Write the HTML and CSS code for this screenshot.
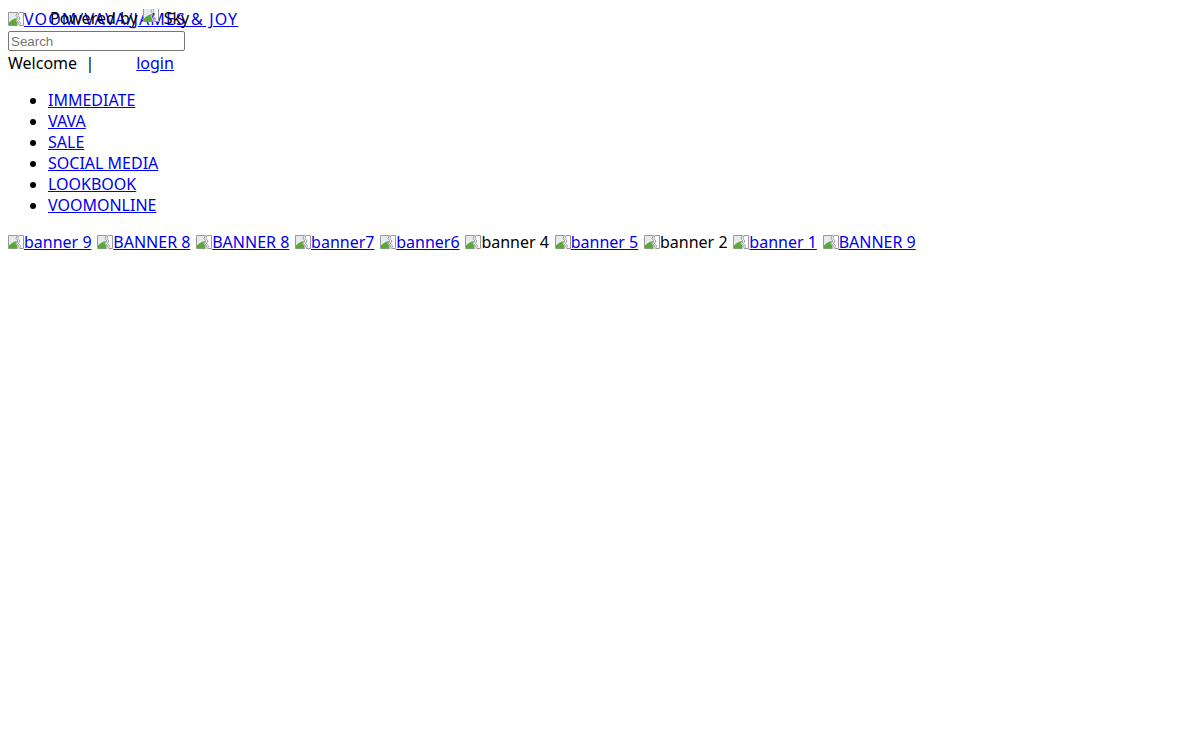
FILE: index.html
```html
<!DOCTYPE html>
<html lang="en">
<head>
<meta charset="utf-8">
<title>VOOM/VAVA/JAMES &amp; JOY</title>
<link rel="stylesheet" href="styles.css">
</head>
<body>
<div class="header">
  <div class="logo-line">
    <a class="alt-link logo" href="#"><svg class="broken" viewBox="0 0 16 16" aria-hidden="true"><path d="M.5 1.5h9l-1.5 3 2 2.5-1.5 2.5 2 2.5-1 2.5H.5z" fill="#e4eaf0" stroke="#9a9a9a"/><path d="M1 14.5V11.5c2.5-2.5 5-4 8.2-4.5l-1.7 2.5 2 2.5-1 2.5z" fill="#5ca63a"/><path d="M11 1.5h4.5v13h-4l1-2.5-2-2.5 1.5-2.5-2-2.5z" fill="#fff" stroke="#9a9a9a"/></svg><span class="logo-text">VOOM/VAVA/JAMES &amp; JOY</span></a>
  </div>
  <div class="powered">Powered by <svg class="broken" viewBox="0 0 16 16" aria-hidden="true"><path d="M.5 1.5h9l-1.5 3 2 2.5-1.5 2.5 2 2.5-1 2.5H.5z" fill="#e4eaf0" stroke="#9a9a9a"/><path d="M1 14.5V11.5c2.5-2.5 5-4 8.2-4.5l-1.7 2.5 2 2.5-1 2.5z" fill="#5ca63a"/><path d="M11 1.5h4.5v13h-4l1-2.5-2-2.5 1.5-2.5-2-2.5z" fill="#fff" stroke="#9a9a9a"/></svg>Sky</div>
  <form class="search"><input type="text" placeholder="Search"></form>
  <div class="welcome"><span>Welcome&nbsp; |</span><a class="login" href="#">login</a></div>
</div>
<ul class="nav">
  <li><a href="#">IMMEDIATE</a></li>
  <li><a href="#">VAVA</a></li>
  <li><a href="#">SALE</a></li>
  <li><a href="#">SOCIAL MEDIA</a></li>
  <li><a href="#">LOOKBOOK</a></li>
  <li><a href="#">VOOMONLINE</a></li>
</ul>
<div class="banners">
  <a class="alt-link" href="#"><svg class="broken" viewBox="0 0 16 16" aria-hidden="true"><path d="M.5 1.5h9l-1.5 3 2 2.5-1.5 2.5 2 2.5-1 2.5H.5z" fill="#e4eaf0" stroke="#9a9a9a"/><path d="M1 14.5V11.5c2.5-2.5 5-4 8.2-4.5l-1.7 2.5 2 2.5-1 2.5z" fill="#5ca63a"/><path d="M11 1.5h4.5v13h-4l1-2.5-2-2.5 1.5-2.5-2-2.5z" fill="#fff" stroke="#9a9a9a"/></svg>banner 9</a>
  <a class="alt-link" href="#"><svg class="broken" viewBox="0 0 16 16" aria-hidden="true"><path d="M.5 1.5h9l-1.5 3 2 2.5-1.5 2.5 2 2.5-1 2.5H.5z" fill="#e4eaf0" stroke="#9a9a9a"/><path d="M1 14.5V11.5c2.5-2.5 5-4 8.2-4.5l-1.7 2.5 2 2.5-1 2.5z" fill="#5ca63a"/><path d="M11 1.5h4.5v13h-4l1-2.5-2-2.5 1.5-2.5-2-2.5z" fill="#fff" stroke="#9a9a9a"/></svg>BANNER 8</a>
  <a class="alt-link" href="#"><svg class="broken" viewBox="0 0 16 16" aria-hidden="true"><path d="M.5 1.5h9l-1.5 3 2 2.5-1.5 2.5 2 2.5-1 2.5H.5z" fill="#e4eaf0" stroke="#9a9a9a"/><path d="M1 14.5V11.5c2.5-2.5 5-4 8.2-4.5l-1.7 2.5 2 2.5-1 2.5z" fill="#5ca63a"/><path d="M11 1.5h4.5v13h-4l1-2.5-2-2.5 1.5-2.5-2-2.5z" fill="#fff" stroke="#9a9a9a"/></svg>BANNER 8</a>
  <a class="alt-link" href="#"><svg class="broken" viewBox="0 0 16 16" aria-hidden="true"><path d="M.5 1.5h9l-1.5 3 2 2.5-1.5 2.5 2 2.5-1 2.5H.5z" fill="#e4eaf0" stroke="#9a9a9a"/><path d="M1 14.5V11.5c2.5-2.5 5-4 8.2-4.5l-1.7 2.5 2 2.5-1 2.5z" fill="#5ca63a"/><path d="M11 1.5h4.5v13h-4l1-2.5-2-2.5 1.5-2.5-2-2.5z" fill="#fff" stroke="#9a9a9a"/></svg>banner7</a>
  <a class="alt-link" href="#"><svg class="broken" viewBox="0 0 16 16" aria-hidden="true"><path d="M.5 1.5h9l-1.5 3 2 2.5-1.5 2.5 2 2.5-1 2.5H.5z" fill="#e4eaf0" stroke="#9a9a9a"/><path d="M1 14.5V11.5c2.5-2.5 5-4 8.2-4.5l-1.7 2.5 2 2.5-1 2.5z" fill="#5ca63a"/><path d="M11 1.5h4.5v13h-4l1-2.5-2-2.5 1.5-2.5-2-2.5z" fill="#fff" stroke="#9a9a9a"/></svg>banner6</a>
  <span class="alt-plain"><svg class="broken" viewBox="0 0 16 16" aria-hidden="true"><path d="M.5 1.5h9l-1.5 3 2 2.5-1.5 2.5 2 2.5-1 2.5H.5z" fill="#e4eaf0" stroke="#9a9a9a"/><path d="M1 14.5V11.5c2.5-2.5 5-4 8.2-4.5l-1.7 2.5 2 2.5-1 2.5z" fill="#5ca63a"/><path d="M11 1.5h4.5v13h-4l1-2.5-2-2.5 1.5-2.5-2-2.5z" fill="#fff" stroke="#9a9a9a"/></svg>banner 4</span>
  <a class="alt-link" href="#"><svg class="broken" viewBox="0 0 16 16" aria-hidden="true"><path d="M.5 1.5h9l-1.5 3 2 2.5-1.5 2.5 2 2.5-1 2.5H.5z" fill="#e4eaf0" stroke="#9a9a9a"/><path d="M1 14.5V11.5c2.5-2.5 5-4 8.2-4.5l-1.7 2.5 2 2.5-1 2.5z" fill="#5ca63a"/><path d="M11 1.5h4.5v13h-4l1-2.5-2-2.5 1.5-2.5-2-2.5z" fill="#fff" stroke="#9a9a9a"/></svg>banner 5</a>
  <span class="alt-plain"><svg class="broken" viewBox="0 0 16 16" aria-hidden="true"><path d="M.5 1.5h9l-1.5 3 2 2.5-1.5 2.5 2 2.5-1 2.5H.5z" fill="#e4eaf0" stroke="#9a9a9a"/><path d="M1 14.5V11.5c2.5-2.5 5-4 8.2-4.5l-1.7 2.5 2 2.5-1 2.5z" fill="#5ca63a"/><path d="M11 1.5h4.5v13h-4l1-2.5-2-2.5 1.5-2.5-2-2.5z" fill="#fff" stroke="#9a9a9a"/></svg>banner 2</span>
  <a class="alt-link" href="#"><svg class="broken" viewBox="0 0 16 16" aria-hidden="true"><path d="M.5 1.5h9l-1.5 3 2 2.5-1.5 2.5 2 2.5-1 2.5H.5z" fill="#e4eaf0" stroke="#9a9a9a"/><path d="M1 14.5V11.5c2.5-2.5 5-4 8.2-4.5l-1.7 2.5 2 2.5-1 2.5z" fill="#5ca63a"/><path d="M11 1.5h4.5v13h-4l1-2.5-2-2.5 1.5-2.5-2-2.5z" fill="#fff" stroke="#9a9a9a"/></svg>banner 1</a>
  <a class="alt-link" href="#"><svg class="broken" viewBox="0 0 16 16" aria-hidden="true"><path d="M.5 1.5h9l-1.5 3 2 2.5-1.5 2.5 2 2.5-1 2.5H.5z" fill="#e4eaf0" stroke="#9a9a9a"/><path d="M1 14.5V11.5c2.5-2.5 5-4 8.2-4.5l-1.7 2.5 2 2.5-1 2.5z" fill="#5ca63a"/><path d="M11 1.5h4.5v13h-4l1-2.5-2-2.5 1.5-2.5-2-2.5z" fill="#fff" stroke="#9a9a9a"/></svg>BANNER 9</a>
</div>
</body>
</html>
```
FILE: styles.css
```css
html, body {
  background: #fff;
}
body {
  margin: 9px 8px 8px;
  font-family: "Noto Sans", "DejaVu Sans", sans-serif;
  font-size: 16px;
  line-height: 21px;
  color: #000;
}
a {
  color: #0000ee;
  text-decoration: underline;
}
.header {
  position: relative;
}
.logo-line {
  height: 21px;
}
.logo-text {
  letter-spacing: 1.1px;
}
.broken {
  width: 16px;
  height: 16px;
  vertical-align: -2px;
}
.powered {
  position: absolute;
  left: 42px;
  top: -2px;
  white-space: nowrap;
}
.powered .broken {
  margin-left: 1px;
  margin-right: 5px;
  vertical-align: 1px;
}
.search {
  margin: 1px 0 0;
}
.search input {
  display: block;
  box-sizing: border-box;
  width: 177px;
  height: 20px;
  margin: 0;
  padding: 1px 2px;
  border: 1px solid #767676;
  border-radius: 2px;
  font-family: "Liberation Sans", Arial, sans-serif;
  font-size: 13.33px;
}
.search input::placeholder {
  color: #757575;
}
.welcome {
  height: 21px;
  margin-top: 2px;
}
.login {
  margin-left: 42px;
}
.nav {
  margin: 16px 0;
  padding-left: 40px;
}
.banners {
  white-space: nowrap;
}
.banners > a,
.banners > span {
  margin-right: 1.6px;
}
.alt-plain {
  color: #000;
}
```
